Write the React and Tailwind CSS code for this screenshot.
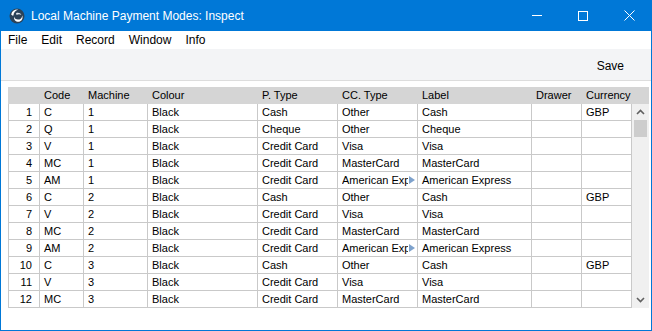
import React from "react";

const cols = [
  { w: 32, key: "n", label: "" },
  { w: 44, key: "code", label: "Code" },
  { w: 64, key: "machine", label: "Machine" },
  { w: 110, key: "colour", label: "Colour" },
  { w: 80, key: "ptype", label: "P. Type" },
  { w: 80, key: "cctype", label: "CC. Type" },
  { w: 114, key: "label", label: "Label" },
  { w: 50, key: "drawer", label: "Drawer" },
  { w: 50, key: "cur", label: "Currency" },
];

const rows = [
  ["1", "C", "1", "Black", "Cash", "Other", "Cash", "", "GBP"],
  ["2", "Q", "1", "Black", "Cheque", "Other", "Cheque", "", ""],
  ["3", "V", "1", "Black", "Credit Card", "Visa", "Visa", "", ""],
  ["4", "MC", "1", "Black", "Credit Card", "MasterCard", "MasterCard", "", ""],
  ["5", "AM", "1", "Black", "Credit Card", "American Expr", "American Express", "", ""],
  ["6", "C", "2", "Black", "Cash", "Other", "Cash", "", "GBP"],
  ["7", "V", "2", "Black", "Credit Card", "Visa", "Visa", "", ""],
  ["8", "MC", "2", "Black", "Credit Card", "MasterCard", "MasterCard", "", ""],
  ["9", "AM", "2", "Black", "Credit Card", "American Expr", "American Express", "", ""],
  ["10", "C", "3", "Black", "Cash", "Other", "Cash", "", "GBP"],
  ["11", "V", "3", "Black", "Credit Card", "Visa", "Visa", "", ""],
  ["12", "MC", "3", "Black", "Credit Card", "MasterCard", "MasterCard", "", ""],
];

function Logo() {
  return (
    <svg width="16" height="16" viewBox="0 0 16 16">
      <circle cx="8" cy="8" r="7.5" fill="#2b4258" />
      <path d="M2.2 6.5 C2.8 3 6 1.2 9.2 1.6 C6.5 2.6 4.6 4.6 4.4 7.6 C3.6 7.8 2.8 7.4 2.2 6.5 Z" fill="#ffffff" />
      <path d="M5 8.5 C5.5 11.5 9.5 12.6 12 10.4 C12.8 9.6 13.2 8.4 13 7.2 C14.2 9.2 13.6 12 11.2 13.3 C8.4 14.8 4.6 13 5 8.5 Z" fill="#ffffff" />
      <path d="M7 5.2 C9 4.2 11.6 5 12.4 7 C11 6 9 6 7.6 7 Z" fill="#dfe6ee" />
    </svg>
  );
}

export default function App() {
  return (
    <div
      className="w-[652px] h-[331px] flex flex-col bg-white overflow-hidden"
      style={{ fontFamily: '"Liberation Sans", Arial, sans-serif' }}
    >
      {/* Title bar */}
      <div className="h-[31px] bg-[#0078d7] flex items-center text-white shrink-0">
        <div className="ml-[9px] mr-[6px] flex items-center">
          <Logo />
        </div>
        <div className="text-[12px] leading-none">Local Machine Payment Modes: Inspect</div>
        <div className="ml-auto flex h-full">
          <div className="w-[46px] h-full flex items-center justify-center">
            <div className="w-[10px] h-px bg-white" />
          </div>
          <div className="w-[46px] h-full flex items-center justify-center">
            <div className="w-[10px] h-[10px] border border-white" />
          </div>
          <div className="w-[46px] h-full flex items-center justify-center">
            <svg width="11" height="11" viewBox="0 0 11 11">
              <path d="M0.5 0.5 L10.5 10.5 M10.5 0.5 L0.5 10.5" stroke="#fff" strokeWidth="1" />
            </svg>
          </div>
        </div>
      </div>
      <div className="flex-1 flex flex-col border-x border-b border-[#0078d7] min-h-0">
        {/* Menu */}
        <div className="h-[18px] flex items-center text-[12px] text-black shrink-0">
          <span className="ml-[7px]">File</span>
          <span className="ml-[14px]">Edit</span>
          <span className="ml-[14px]">Record</span>
          <span className="ml-[14px]">Window</span>
          <span className="ml-[14px]">Info</span>
        </div>
        {/* Toolbar */}
        <div className="h-[32px] bg-[#f3f4f6] border-b border-[#dddddd] flex items-center justify-end pr-[27px] text-[12px] text-black shrink-0">
          <span className="mt-[2px]">Save</span>
        </div>
        {/* Table */}
        <div className="mt-[6px] ml-[7px] mr-[2px] text-[11px] text-black">
          <div className="flex h-[17px] bg-[#d5d5d5]">
            {cols.map((c) => (
              <div
                key={c.key}
                style={{ width: c.w }}
                className="shrink-0 pl-[4px] flex items-center leading-none"
              >
                {c.label}
              </div>
            ))}
            <div className="flex-1" />
          </div>
          <div className="flex">
            <div>
              {rows.map((r, ri) => (
                <div key={ri} className="flex h-[17px]">
                  {r.map((v, ci) => (
                    <div
                      key={ci}
                      style={{ width: cols[ci].w }}
                      className={
                        "shrink-0 border-b border-r border-[#c9c9c9] flex items-center leading-none relative overflow-hidden whitespace-nowrap " +
                        (ci === 0 ? "border-l justify-end pr-[7px]" : "pl-[4px]")
                      }
                    >
                      {ci === 5 && v === "American Expr" ? (
                        <>
                          <span className="block overflow-hidden w-[66px]">American Expr</span>
                          <svg className="absolute right-[2px] top-[4px]" width="6" height="8" viewBox="0 0 6 8">
                            <path d="M0 0 L6 4 L0 8 Z" fill="#7ea2cc" />
                          </svg>
                        </>
                      ) : (
                        v
                      )}
                    </div>
                  ))}
                </div>
              ))}
            </div>
            {/* Scrollbar */}
            <div className="w-[17px] h-[204px] bg-[#f0f0f0] flex flex-col items-center">
              <div className="h-[16px] flex items-center justify-center">
                <svg width="9" height="6" viewBox="0 0 9 6">
                  <path d="M1 5 L4.5 1.5 L8 5" stroke="#606060" strokeWidth="1.6" fill="none" />
                </svg>
              </div>
              <div className="w-[13px] h-[17px] bg-[#cdcdcd]" />
              <div className="flex-1" />
              <div className="h-[16px] flex items-center justify-center">
                <svg width="9" height="6" viewBox="0 0 9 6">
                  <path d="M1 1 L4.5 4.5 L8 1" stroke="#606060" strokeWidth="1.6" fill="none" />
                </svg>
              </div>
            </div>
          </div>
        </div>
      </div>
    </div>
  );
}
